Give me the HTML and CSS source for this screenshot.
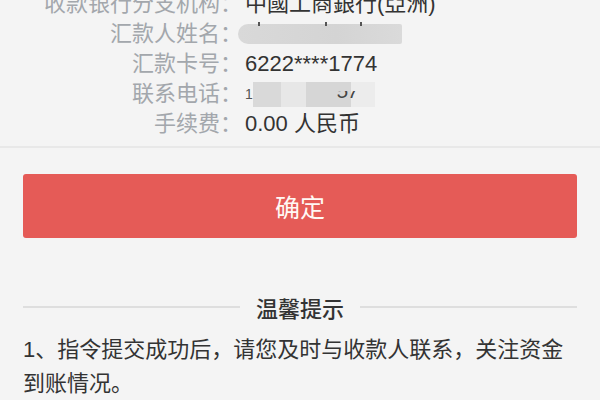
FILE: index.html
```html
<!DOCTYPE html>
<html lang="zh-CN">
<head>
<meta charset="utf-8">
<title>转账确认</title>
<link rel="stylesheet" href="styles.css">
</head>
<body>
<div class="info">
  <div class="row"><span class="label">收款银行分支机构：</span><span class="value">中國工商銀行(亞洲)</span></div>
  <div class="row"><span class="label">汇款人姓名：</span><span class="value"><span class="mask-name"><i class="tick t1"></i><i class="tick t2"></i><i class="tick t3"></i></span></span></div>
  <div class="row"><span class="label">汇款卡号：</span><span class="value">6222****1774</span></div>
  <div class="row"><span class="label">联系电话：</span><span class="value phone"><span class="frag">1</span><span class="mask-phone"><span class="blk b1"></span><span class="blk b2"></span><span class="blk b3"></span><span class="blk b4"></span></span><span class="frag2"><span class="frag2-in">57</span></span></span></div>
  <div class="row"><span class="label">手续费：</span><span class="value">0.00 人民币</span></div>
</div>
<div class="btn">确定</div>
<div class="divider"><span class="line"></span><span class="divider-text">温馨提示</span><span class="line"></span></div>
<p class="tip">1、指令提交成功后，请您及时与收款人联系，关注资金到账情况。</p>
</body>
</html>
```
FILE: styles.css
```css
html, body {
  margin: 0;
  padding: 0;
  background: #f4f4f4;
  font-family: "Liberation Sans", "Noto Sans CJK SC", sans-serif;
  overflow: hidden;
}
.info {
  margin-top: -11px;
  padding-bottom: 7px;
  border-bottom: 2px solid #e8e8e8;
}
.row {
  display: grid;
  grid-template-columns: 242px 1fr;
  column-gap: 3px;
  font-size: 22px;
  line-height: 30px;
  height: 30px;
}
.label {
  text-align: right;
  color: #a3a7ac;
}
.value {
  color: #333;
  display: flex;
  align-items: center;
  white-space: nowrap;
}
.mask-name {
  position: relative;
  display: block;
  width: 164px;
  height: 20px;
  margin-left: -7px;
  border-radius: 10px 2px 2px 10px;
  background: linear-gradient(90deg, #d9d9d9, #d4d4d4 60%, #dadada);
}
.tick {
  position: absolute;
  top: -2px;
  width: 2px;
  height: 4px;
  background: #555;
}
.t1 { left: 20px; }
.t2 { left: 87px; }
.t3 { left: 122px; }
.phone { position: relative; }
.frag {
  color: #555;
  font-size: 14px;
  width: 8px;
  overflow: hidden;
}
.mask-phone {
  display: flex;
  height: 25px;
}
.blk { display: block; height: 25px; }
.b1 { width: 28px; background: #d9d9d9; }
.b2 { width: 25px; background: #e7e7e7; }
.b3 { width: 45px; background: #d6d6d6; }
.b4 { width: 24px; background: #ececec; }
.frag2 {
  position: absolute;
  left: 92px;
  top: 12px;
  height: 9px;
  overflow: hidden;
  display: block;
}
.frag2-in {
  display: block;
  margin-top: -10px;
  font-size: 20px;
  line-height: 20px;
  color: #444;
  font-style: italic;
}
.btn {
  margin: 26px 23px 0;
  height: 64px;
  border-radius: 3px;
  background: #e55b57;
  color: #fff8f4;
  font-size: 25px;
  display: flex;
  align-items: center;
  justify-content: center;
  font-family: "Noto Sans CJK SC", sans-serif;
}
.divider {
  margin: 54px 23px 0;
  display: flex;
  align-items: center;
  height: 30px;
  gap: 16px;
}
.line {
  flex: 1;
  height: 2px;
  background: #dedede;
}
.divider-text {
  font-size: 22px;
  line-height: 30px;
  font-weight: 500;
  color: #333;
  font-family: "Noto Sans CJK SC", sans-serif;
}
.tip {
  margin: 11px 23px 0;
  font-size: 22px;
  line-height: 34px;
  color: #333;
}
```
